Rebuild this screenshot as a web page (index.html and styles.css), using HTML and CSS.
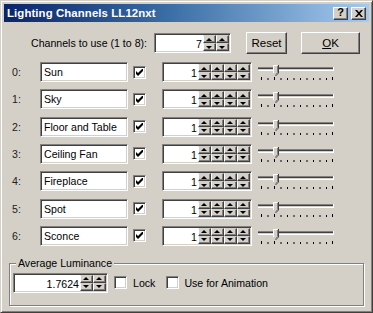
FILE: index.html
```html
<!DOCTYPE html>
<html>
<head>
<meta charset="utf-8">
<link rel="stylesheet" href="styles.css">
</head>
<body>
<div class="window">
  <div class="titlebar">
    <span class="title">Lighting Channels LL12nxt</span>
    <div class="tbtns">
      <span class="tbtn q">?</span>
      <span class="tbtn"><svg width="8" height="7" viewBox="0 0 8 7"><path d="M0 0h2l2 2.2L6 0h2L5 3.5 8 7H6L4 4.8 2 7H0l3-3.5z" fill="#000"/></svg></span>
    </div>
  </div>
  <div class="content">
    <div class="toprow">
      <span class="toplbl">Channels to use (1 to 8):</span>
      <div class="spin spin-top"><span class="val">7</span><div class="arrows"><div class="col"><span class="sb up"></span><span class="sb dn"></span></div><div class="col"><span class="sb up"></span><span class="sb dn"></span></div></div></div>
      <span class="btn reset">Reset</span>
      <span class="btn ok"><u>O</u>K</span>
    </div>

    <div class="channels">
      <span class="num">0:</span><span class="field">Sun</span><span class="chk on"><svg width="7" height="7" viewBox="0 0 7 7"><path d="M0 2v3l2 2 5-5V-1L2 4z" fill="#000"/></svg></span>
      <div class="spin spin-row"><span class="val">1</span><div class="arrows"><div class="col"><span class="sb up"></span><span class="sb dn"></span></div><div class="col"><span class="sb up"></span><span class="sb dn"></span></div><div class="col"><span class="sb up"></span><span class="sb dn"></span></div><div class="col"><span class="sb up"></span><span class="sb dn"></span></div></div></div>
      <svg class="slider" width="76" height="20" viewBox="0 0 76 20"><use href="#trk"/></svg>

      <span class="num">1:</span><span class="field">Sky</span><span class="chk on"><svg width="7" height="7" viewBox="0 0 7 7"><path d="M0 2v3l2 2 5-5V-1L2 4z" fill="#000"/></svg></span>
      <div class="spin spin-row"><span class="val">1</span><div class="arrows"><div class="col"><span class="sb up"></span><span class="sb dn"></span></div><div class="col"><span class="sb up"></span><span class="sb dn"></span></div><div class="col"><span class="sb up"></span><span class="sb dn"></span></div><div class="col"><span class="sb up"></span><span class="sb dn"></span></div></div></div>
      <svg class="slider" width="76" height="20" viewBox="0 0 76 20"><use href="#trk"/></svg>

      <span class="num">2:</span><span class="field">Floor and Table</span><span class="chk on"><svg width="7" height="7" viewBox="0 0 7 7"><path d="M0 2v3l2 2 5-5V-1L2 4z" fill="#000"/></svg></span>
      <div class="spin spin-row"><span class="val">1</span><div class="arrows"><div class="col"><span class="sb up"></span><span class="sb dn"></span></div><div class="col"><span class="sb up"></span><span class="sb dn"></span></div><div class="col"><span class="sb up"></span><span class="sb dn"></span></div><div class="col"><span class="sb up"></span><span class="sb dn"></span></div></div></div>
      <svg class="slider" width="76" height="20" viewBox="0 0 76 20"><use href="#trk"/></svg>

      <span class="num">3:</span><span class="field">Ceiling Fan</span><span class="chk on"><svg width="7" height="7" viewBox="0 0 7 7"><path d="M0 2v3l2 2 5-5V-1L2 4z" fill="#000"/></svg></span>
      <div class="spin spin-row"><span class="val">1</span><div class="arrows"><div class="col"><span class="sb up"></span><span class="sb dn"></span></div><div class="col"><span class="sb up"></span><span class="sb dn"></span></div><div class="col"><span class="sb up"></span><span class="sb dn"></span></div><div class="col"><span class="sb up"></span><span class="sb dn"></span></div></div></div>
      <svg class="slider" width="76" height="20" viewBox="0 0 76 20"><use href="#trk"/></svg>

      <span class="num">4:</span><span class="field">Fireplace</span><span class="chk on"><svg width="7" height="7" viewBox="0 0 7 7"><path d="M0 2v3l2 2 5-5V-1L2 4z" fill="#000"/></svg></span>
      <div class="spin spin-row"><span class="val">1</span><div class="arrows"><div class="col"><span class="sb up"></span><span class="sb dn"></span></div><div class="col"><span class="sb up"></span><span class="sb dn"></span></div><div class="col"><span class="sb up"></span><span class="sb dn"></span></div><div class="col"><span class="sb up"></span><span class="sb dn"></span></div></div></div>
      <svg class="slider" width="76" height="20" viewBox="0 0 76 20"><use href="#trk"/></svg>

      <span class="num">5:</span><span class="field">Spot</span><span class="chk on"><svg width="7" height="7" viewBox="0 0 7 7"><path d="M0 2v3l2 2 5-5V-1L2 4z" fill="#000"/></svg></span>
      <div class="spin spin-row"><span class="val">1</span><div class="arrows"><div class="col"><span class="sb up"></span><span class="sb dn"></span></div><div class="col"><span class="sb up"></span><span class="sb dn"></span></div><div class="col"><span class="sb up"></span><span class="sb dn"></span></div><div class="col"><span class="sb up"></span><span class="sb dn"></span></div></div></div>
      <svg class="slider" width="76" height="20" viewBox="0 0 76 20"><use href="#trk"/></svg>

      <span class="num">6:</span><span class="field">Sconce</span><span class="chk on"><svg width="7" height="7" viewBox="0 0 7 7"><path d="M0 2v3l2 2 5-5V-1L2 4z" fill="#000"/></svg></span>
      <div class="spin spin-row"><span class="val">1</span><div class="arrows"><div class="col"><span class="sb up"></span><span class="sb dn"></span></div><div class="col"><span class="sb up"></span><span class="sb dn"></span></div><div class="col"><span class="sb up"></span><span class="sb dn"></span></div><div class="col"><span class="sb up"></span><span class="sb dn"></span></div></div></div>
      <svg class="slider" width="76" height="20" viewBox="0 0 76 20"><use href="#trk"/></svg>
    </div>

    <div class="group">
      <span class="legend">Average Luminance</span>
      <div class="grow">
        <div class="spin spin-avg"><span class="val">1.7624</span><div class="arrows"><div class="col"><span class="sb up"></span><span class="sb dn"></span></div><div class="col"><span class="sb up"></span><span class="sb dn"></span></div></div></div>
        <span class="chk lock"></span><span class="clbl">Lock</span>
        <span class="chk anim"></span><span class="clbl">Use for Animation</span>
      </div>
    </div>
  </div>
</div>

<svg width="0" height="0" class="defs">
  <defs>
    <g id="trk">
      <rect x="0" y="5" width="76" height="1" fill="#808080"/>
      <rect x="0" y="6" width="76" height="1" fill="#404040"/>
      <rect x="0" y="7" width="76" height="1" fill="#d4d0c8"/>
      <rect x="0" y="8" width="76" height="1" fill="#ffffff"/>
      <rect x="75" y="5" width="1" height="4" fill="#ffffff"/>
      <polygon points="15,3 20,3 20,11 17.5,13.5 15,11" fill="#d4d0c8"/>
      <path d="M15.5 11V3.5H19.5" stroke="#ffffff" stroke-width="1" fill="none"/>
      <path d="M20.5 3V11L17.5 14" stroke="#404040" stroke-width="1" fill="none"/>
      <path d="M19.5 4V10.6L17.5 12.6" stroke="#808080" stroke-width="1" fill="none"/>
      <g fill="#000">
        <rect x="3" y="15" width="1" height="3"/>
        <rect x="9.5" y="16" width="1" height="2"/>
        <rect x="16" y="15" width="1" height="3"/>
        <rect x="22.5" y="16" width="1" height="2"/>
        <rect x="29" y="16" width="1" height="2"/>
        <rect x="35.5" y="16" width="1" height="2"/>
        <rect x="42" y="16" width="1" height="2"/>
        <rect x="48.5" y="16" width="1" height="2"/>
        <rect x="55" y="16" width="1" height="2"/>
        <rect x="61.5" y="16" width="1" height="2"/>
        <rect x="68" y="16" width="1" height="2"/>
        <rect x="74" y="15" width="1" height="3"/>
      </g>
    </g>
  </defs>
</svg>
</body>
</html>
```

FILE: styles.css
```css
* { box-sizing: border-box; }
html, body { margin: 0; padding: 0; background: #d4d0c8; }
body {
  font-family: "Liberation Sans", Arial, sans-serif;
  font-size: 10.6px;
  color: #000;
}
.defs { position: absolute; width: 0; height: 0; overflow: hidden; }

.window {
  width: 373px;
  height: 313px;
  background: #d4d0c8;
  border: 1px solid;
  border-color: #d4d0c8 #404040 #404040 #d4d0c8;
  box-shadow: inset 1px 1px 0 #fff, inset -1px -1px 0 #808080;
  padding: 3px;
  display: flex;
  flex-direction: column;
}

.titlebar {
  height: 18px;
  background: linear-gradient(to right, #0a246a 0%, #3a6ea5 45%, #a6caf0 100%);
  display: flex;
  align-items: center;
  justify-content: space-between;
  padding: 0 3px 0 3px;
}
.title {
  color: #fff;
  font-weight: bold;
  font-size: 11.4px;
  letter-spacing: 0.1px;
}
.tbtns { display: flex; gap: 3px; }
.tbtn {
  width: 15px;
  height: 13px;
  background: #d4d0c8;
  border: 1px solid;
  border-color: #fff #404040 #404040 #fff;
  box-shadow: inset -1px -1px 0 #808080;
  display: flex;
  align-items: center;
  justify-content: center;
  font-weight: bold;
  font-size: 11px;
  line-height: 1;
}
.tbtn.q { font-size: 11px; padding-bottom: 1px; }

.content { display: flex; flex-direction: column; }

.toprow {
  display: flex;
  align-items: center;
  margin-top: 10px;
  height: 22px;
}
.toplbl { width: 143px; text-align: right; }

.spin {
  display: flex;
  height: 20px;
  background: #fff;
  border: 1px solid;
  border-color: #808080 #fff #fff #808080;
  box-shadow: inset 1px 1px 0 #404040, inset -1px -1px 0 #d4d0c8;
  padding: 1px 1px 1px 1px;
}
.spin .val {
  flex: 1;
  text-align: right;
  line-height: 16px;
  padding-right: 1px;
  padding-top: 1px;
}
.arrows { display: flex; }
.col { display: flex; flex-direction: column; width: 13px; }
.sb {
  flex: 1;
  background: #d4d0c8;
  border: 1px solid;
  border-color: #d4d0c8 #404040 #404040 #fff;
  box-shadow: inset -1px -1px 0 #808080;
  display: flex;
  align-items: center;
  justify-content: center;
}
.sb::after {
  content: "";
  width: 0;
  height: 0;
  border-left: 3px solid transparent;
  border-right: 3px solid transparent;
}
.sb.up::after { border-bottom: 3px solid #000; margin-right: 1px; }
.sb.dn::after { border-top: 3px solid #000; margin-right: 1px; }

.spin-top { width: 77px; margin-left: 7px; }
.spin-row { width: 90px; }
.spin-avg { width: 95px; }

.btn {
  height: 22px;
  display: flex;
  align-items: center;
  justify-content: center;
  background: #d4d0c8;
  border: 1px solid;
  border-color: #fff #404040 #404040 #fff;
  box-shadow: inset -1px -1px 0 #808080;
  font-size: 11.5px;
}
.reset { width: 41px; margin-left: 15px; }
.ok { width: 59px; margin-left: 14px; }
.ok u { text-decoration: underline; text-underline-offset: 1px; }

.channels {
  display: grid;
  grid-template-columns: 28px 93px 29px 96px 76px;
  grid-auto-rows: 20px;
  row-gap: 7.33px;
  align-items: center;
  padding-left: 8px;
  margin-top: 8px;
}
.num { color: #222; }
.field {
  width: 88px;
  height: 20px;
  background: #fff;
  border: 1px solid;
  border-color: #808080 #fff #fff #808080;
  box-shadow: inset 1px 1px 0 #404040, inset -1px -1px 0 #d4d0c8;
  padding: 3px 0 0 3px;
  white-space: nowrap;
  overflow: hidden;
}
.chk {
  width: 13px;
  height: 13px;
  background: #fff;
  border: 1px solid;
  border-color: #808080 #fff #fff #808080;
  box-shadow: inset 1px 1px 0 #404040, inset -1px -1px 0 #d4d0c8;
  display: flex;
  align-items: center;
  justify-content: center;
}
.chk svg { display: block; }
.slider { display: block; }

.group {
  margin: 17px 0 0 5px;
  width: 355px;
  height: 43px;
  border: 1px solid #808080;
  box-shadow: 1px 1px 0 #fff, inset 1px 1px 0 #fff;
  display: flex;
  flex-direction: column;
}
.legend {
  align-self: flex-start;
  margin: -8px 0 0 6px;
  padding: 0 2px;
  background: #d4d0c8;
  line-height: 14px;
}
.grow {
  display: flex;
  align-items: center;
  margin: 3px 0 0 3px;
}
.lock { margin-left: 6px; }
.clbl { margin-left: 6px; }
.anim { margin-left: 11px; }
.anim + .clbl { margin-left: 5px; }
```
